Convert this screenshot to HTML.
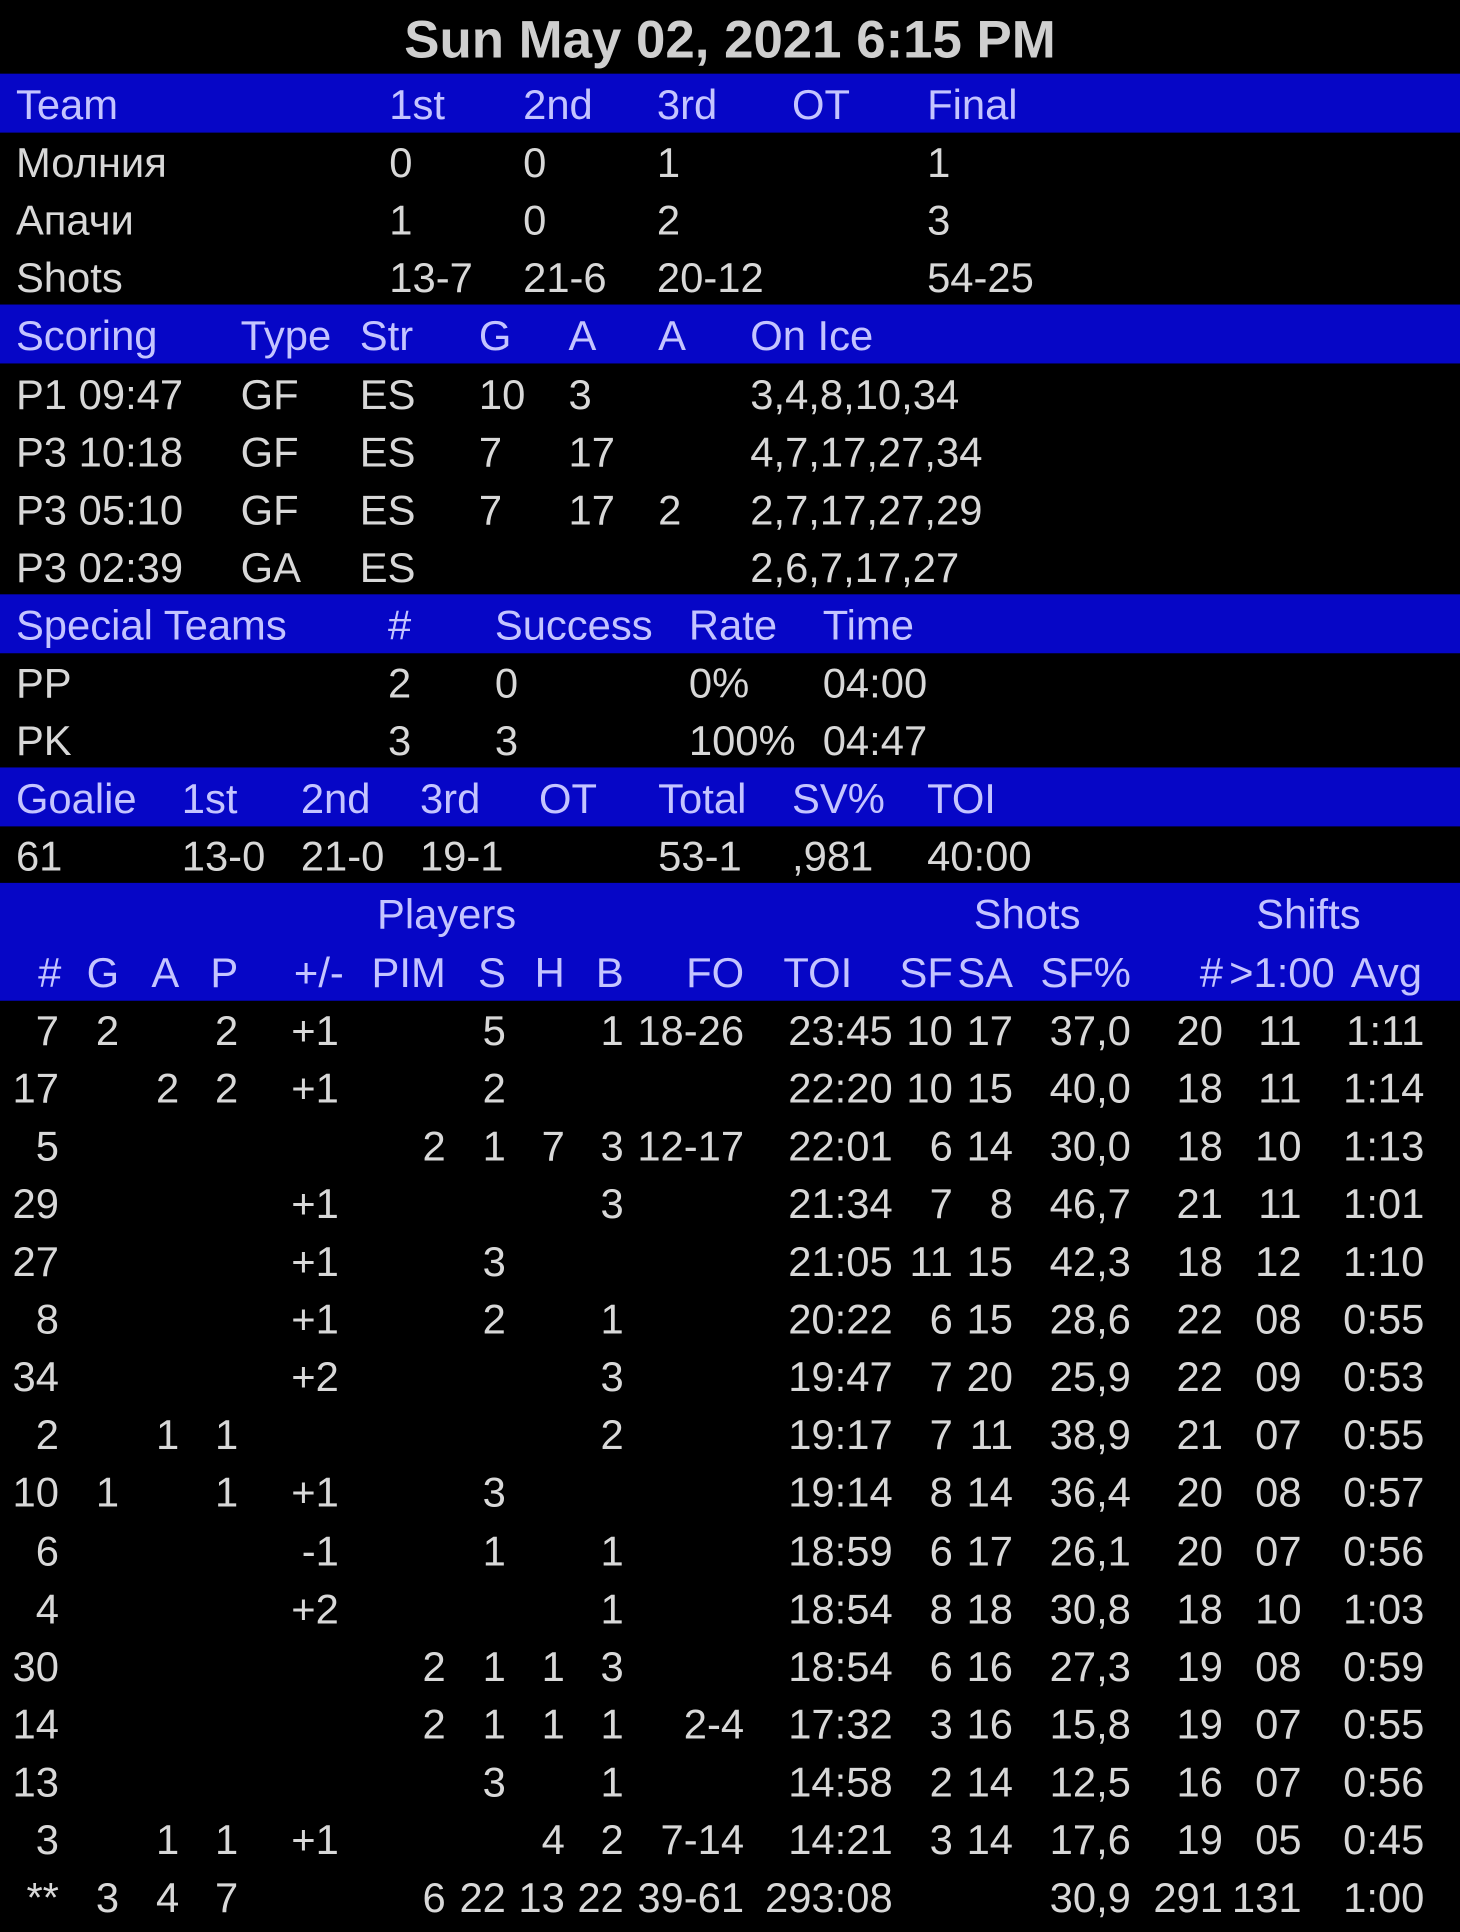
<!DOCTYPE html>
<html><head><meta charset="utf-8"><style>
html,body{margin:0;padding:0;background:#000;}
body{width:1460px;height:1925px;overflow:hidden;}
#w{position:absolute;left:0;top:0;width:1189px;height:1568px;transform:scale(1.22792);transform-origin:0 0;font-family:"Liberation Sans","DejaVu Sans",sans-serif;font-size:34px;color:#d8d8d8;}
.t{position:absolute;left:0;top:0;width:1189px;height:60px;line-height:66px;text-align:center;font-weight:bold;font-size:43px;color:#cfcfcf;}
.r{position:absolute;left:0;width:1189px;height:47.1px;line-height:53px;}
.b{background:#0606c6;color:#c4c4ff;height:48px;}
.r span{position:absolute;top:0;white-space:nowrap;}
.p span:nth-child(1){right:1141px}
.p span:nth-child(2){right:1092px}
.p span:nth-child(3){right:1043px}
.p span:nth-child(4){right:995px}
.p span:nth-child(5){right:913px}
.p span:nth-child(6){right:826px}
.p span:nth-child(7){right:777px}
.p span:nth-child(8){right:729px}
.p span:nth-child(9){right:681px}
.p span:nth-child(10){right:583px}
.p span:nth-child(11){right:462px}
.p span:nth-child(12){right:413px}
.p span:nth-child(13){right:364px}
.p span:nth-child(14){right:268px}
.p span:nth-child(15){right:193px}
.p span:nth-child(16){right:129px}
.p span:nth-child(17){right:29px}
.h span:nth-child(1){right:1139px}
.h span:nth-child(5){right:909px}
.h span:nth-child(11){right:495px}
.h span:nth-child(16){right:102px}
.h span:nth-child(17){right:31px}
</style></head><body><div id="w">
<div class="t">Sun May 02, 2021 6:15 PM</div>

<div class="r b" style="top:60px"><span style="left:13px">Team</span><span style="left:317px">1st</span><span style="left:426px">2nd</span><span style="left:535px">3rd</span><span style="left:645px">OT</span><span style="left:755px">Final</span></div>
<div class="r" style="top:107.1px"><span style="left:13px">Молния</span><span style="left:317px">0</span><span style="left:426px">0</span><span style="left:535px">1</span><span style="left:755px">1</span></div>
<div class="r" style="top:154.2px"><span style="left:13px">Апачи</span><span style="left:317px">1</span><span style="left:426px">0</span><span style="left:535px">2</span><span style="left:755px">3</span></div>
<div class="r" style="top:201.3px"><span style="left:13px">Shots</span><span style="left:317px">13-7</span><span style="left:426px">21-6</span><span style="left:535px">20-12</span><span style="left:755px">54-25</span></div>

<div class="r b" style="top:248.4px"><span style="left:13px">Scoring</span><span style="left:196px">Type</span><span style="left:293px">Str</span><span style="left:390px">G</span><span style="left:463px">A</span><span style="left:536px">A</span><span style="left:611px">On Ice</span></div>
<div class="r" style="top:295.5px"><span style="left:13px">P1 09:47</span><span style="left:196px">GF</span><span style="left:293px">ES</span><span style="left:390px">10</span><span style="left:463px">3</span><span style="left:611px">3,4,8,10,34</span></div>
<div class="r" style="top:342.6px"><span style="left:13px">P3 10:18</span><span style="left:196px">GF</span><span style="left:293px">ES</span><span style="left:390px">7</span><span style="left:463px">17</span><span style="left:611px">4,7,17,27,34</span></div>
<div class="r" style="top:389.7px"><span style="left:13px">P3 05:10</span><span style="left:196px">GF</span><span style="left:293px">ES</span><span style="left:390px">7</span><span style="left:463px">17</span><span style="left:536px">2</span><span style="left:611px">2,7,17,27,29</span></div>
<div class="r" style="top:436.8px"><span style="left:13px">P3 02:39</span><span style="left:196px">GA</span><span style="left:293px">ES</span><span style="left:611px">2,6,7,17,27</span></div>

<div class="r b" style="top:483.9px"><span style="left:13px">Special Teams</span><span style="left:316px">#</span><span style="left:403px">Success</span><span style="left:561px">Rate</span><span style="left:670px">Time</span></div>
<div class="r" style="top:531px"><span style="left:13px">PP</span><span style="left:316px">2</span><span style="left:403px">0</span><span style="left:561px">0%</span><span style="left:670px">04:00</span></div>
<div class="r" style="top:578.1px"><span style="left:13px">PK</span><span style="left:316px">3</span><span style="left:403px">3</span><span style="left:561px">100%</span><span style="left:670px">04:47</span></div>

<div class="r b" style="top:625.2px"><span style="left:13px">Goalie</span><span style="left:148px">1st</span><span style="left:245px">2nd</span><span style="left:342px">3rd</span><span style="left:439px">OT</span><span style="left:536px">Total</span><span style="left:645px">SV%</span><span style="left:755px">TOI</span></div>
<div class="r" style="top:672.3px"><span style="left:13px">61</span><span style="left:148px">13-0</span><span style="left:245px">21-0</span><span style="left:342px">19-1</span><span style="left:536px">53-1</span><span style="left:645px">,981</span><span style="left:755px">40:00</span></div>

<div class="r b" style="top:719.4px;height:49px"><span style="left:307px">Players</span><span style="left:793px">Shots</span><span style="left:1023px">Shifts</span></div>
<div class="r b p h" style="top:766.5px"><span>#</span><span>G</span><span>A</span><span>P</span><span>+/-</span><span>PIM</span><span>S</span><span>H</span><span>B</span><span>FO</span><span>TOI</span><span>SF</span><span>SA</span><span>SF%</span><span>#</span><span>&gt;1:00</span><span>Avg</span></div>

<div class="r p" style="top:813.6px"><span>7</span><span>2</span><span></span><span>2</span><span>+1</span><span></span><span>5</span><span></span><span>1</span><span>18-26</span><span>23:45</span><span>10</span><span>17</span><span>37,0</span><span>20</span><span>11</span><span>1:11</span></div>
<div class="r p" style="top:860.7px"><span>17</span><span></span><span>2</span><span>2</span><span>+1</span><span></span><span>2</span><span></span><span></span><span></span><span>22:20</span><span>10</span><span>15</span><span>40,0</span><span>18</span><span>11</span><span>1:14</span></div>
<div class="r p" style="top:907.8px"><span>5</span><span></span><span></span><span></span><span></span><span>2</span><span>1</span><span>7</span><span>3</span><span>12-17</span><span>22:01</span><span>6</span><span>14</span><span>30,0</span><span>18</span><span>10</span><span>1:13</span></div>
<div class="r p" style="top:954.9px"><span>29</span><span></span><span></span><span></span><span>+1</span><span></span><span></span><span></span><span>3</span><span></span><span>21:34</span><span>7</span><span>8</span><span>46,7</span><span>21</span><span>11</span><span>1:01</span></div>
<div class="r p" style="top:1002px"><span>27</span><span></span><span></span><span></span><span>+1</span><span></span><span>3</span><span></span><span></span><span></span><span>21:05</span><span>11</span><span>15</span><span>42,3</span><span>18</span><span>12</span><span>1:10</span></div>
<div class="r p" style="top:1049.1px"><span>8</span><span></span><span></span><span></span><span>+1</span><span></span><span>2</span><span></span><span>1</span><span></span><span>20:22</span><span>6</span><span>15</span><span>28,6</span><span>22</span><span>08</span><span>0:55</span></div>
<div class="r p" style="top:1096.2px"><span>34</span><span></span><span></span><span></span><span>+2</span><span></span><span></span><span></span><span>3</span><span></span><span>19:47</span><span>7</span><span>20</span><span>25,9</span><span>22</span><span>09</span><span>0:53</span></div>
<div class="r p" style="top:1143.3px"><span>2</span><span></span><span>1</span><span>1</span><span></span><span></span><span></span><span></span><span>2</span><span></span><span>19:17</span><span>7</span><span>11</span><span>38,9</span><span>21</span><span>07</span><span>0:55</span></div>
<div class="r p" style="top:1190.4px"><span>10</span><span>1</span><span></span><span>1</span><span>+1</span><span></span><span>3</span><span></span><span></span><span></span><span>19:14</span><span>8</span><span>14</span><span>36,4</span><span>20</span><span>08</span><span>0:57</span></div>
<div class="r p" style="top:1237.5px"><span>6</span><span></span><span></span><span></span><span>-1</span><span></span><span>1</span><span></span><span>1</span><span></span><span>18:59</span><span>6</span><span>17</span><span>26,1</span><span>20</span><span>07</span><span>0:56</span></div>
<div class="r p" style="top:1284.6px"><span>4</span><span></span><span></span><span></span><span>+2</span><span></span><span></span><span></span><span>1</span><span></span><span>18:54</span><span>8</span><span>18</span><span>30,8</span><span>18</span><span>10</span><span>1:03</span></div>
<div class="r p" style="top:1331.7px"><span>30</span><span></span><span></span><span></span><span></span><span>2</span><span>1</span><span>1</span><span>3</span><span></span><span>18:54</span><span>6</span><span>16</span><span>27,3</span><span>19</span><span>08</span><span>0:59</span></div>
<div class="r p" style="top:1378.8px"><span>14</span><span></span><span></span><span></span><span></span><span>2</span><span>1</span><span>1</span><span>1</span><span>2-4</span><span>17:32</span><span>3</span><span>16</span><span>15,8</span><span>19</span><span>07</span><span>0:55</span></div>
<div class="r p" style="top:1425.9px"><span>13</span><span></span><span></span><span></span><span></span><span></span><span>3</span><span></span><span>1</span><span></span><span>14:58</span><span>2</span><span>14</span><span>12,5</span><span>16</span><span>07</span><span>0:56</span></div>
<div class="r p" style="top:1473px"><span>3</span><span></span><span>1</span><span>1</span><span>+1</span><span></span><span></span><span>4</span><span>2</span><span>7-14</span><span>14:21</span><span>3</span><span>14</span><span>17,6</span><span>19</span><span>05</span><span>0:45</span></div>
<div class="r p" style="top:1520.1px"><span>**</span><span>3</span><span>4</span><span>7</span><span></span><span>6</span><span>22</span><span>13</span><span>22</span><span>39-61</span><span>293:08</span><span></span><span></span><span>30,9</span><span>291</span><span>131</span><span>1:00</span></div>
</div></body></html>
